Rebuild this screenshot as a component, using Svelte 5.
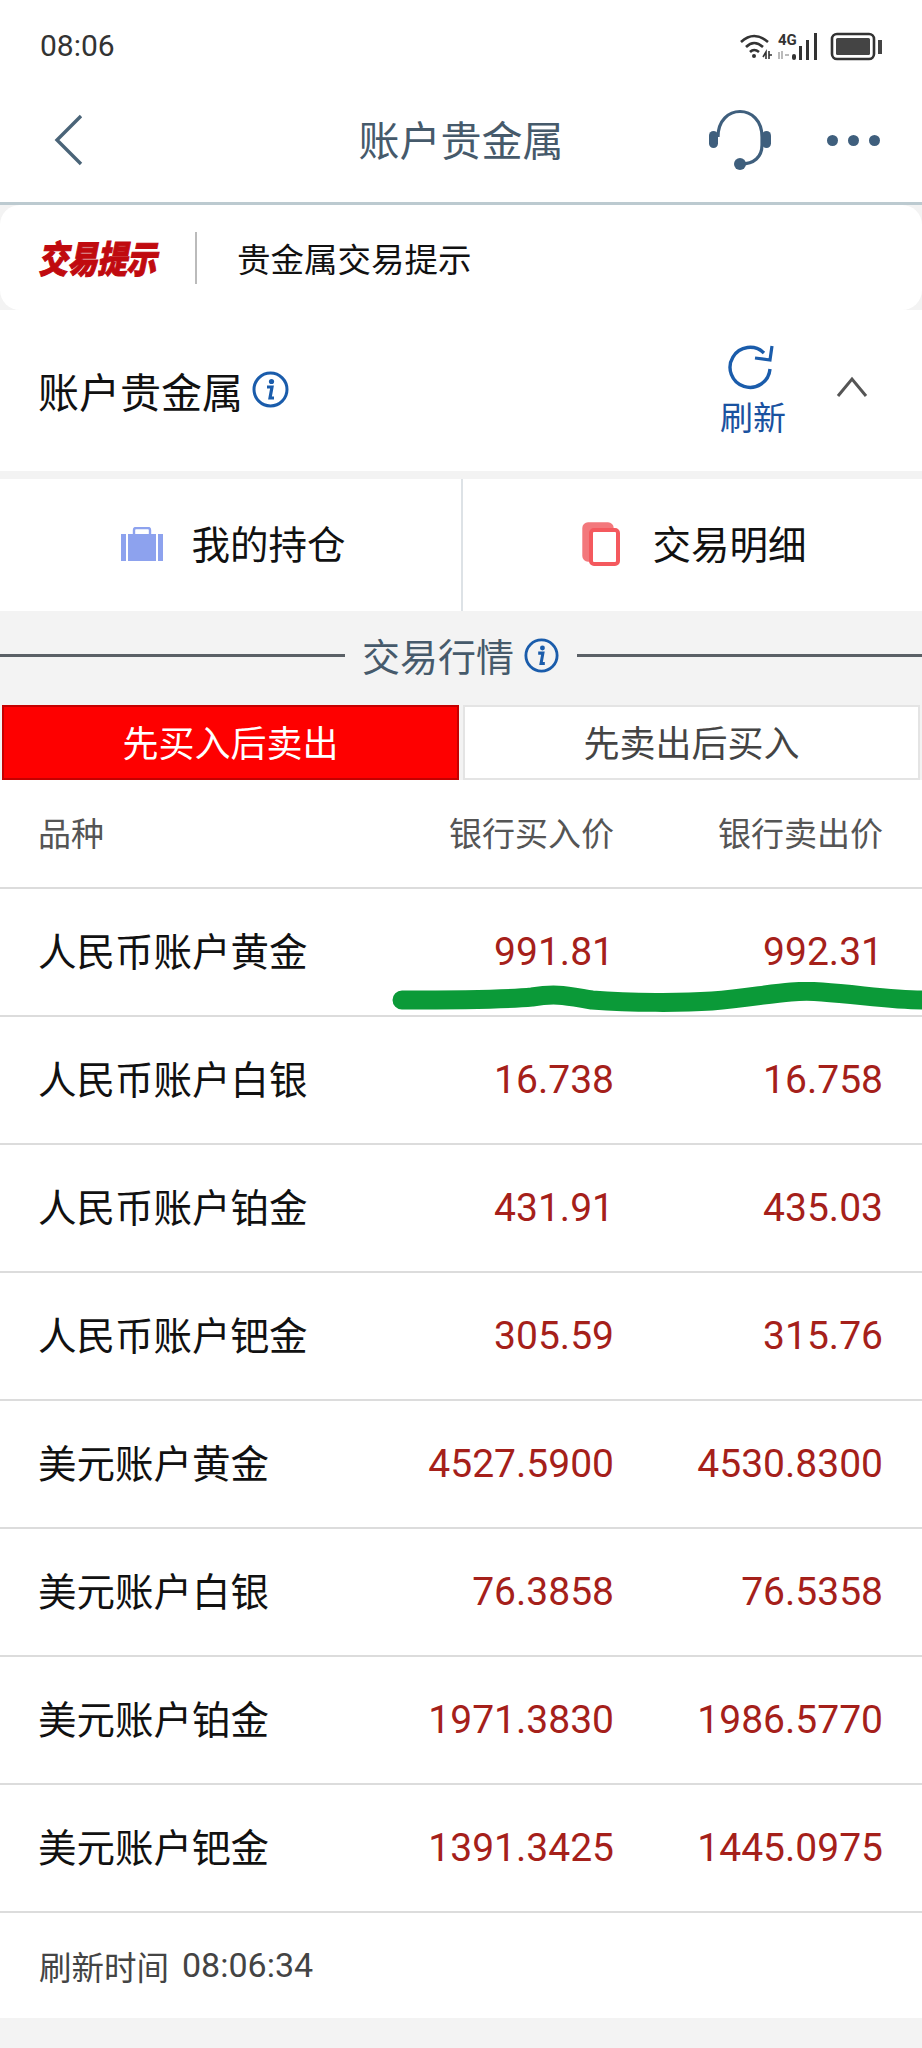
<script>
  const rows = [
    { name: '人民币账户黄金', buy: '991.81', sell: '992.31' },
    { name: '人民币账户白银', buy: '16.738', sell: '16.758' },
    { name: '人民币账户铂金', buy: '431.91', sell: '435.03' },
    { name: '人民币账户钯金', buy: '305.59', sell: '315.76' },
    { name: '美元账户黄金', buy: '4527.5900', sell: '4530.8300' },
    { name: '美元账户白银', buy: '76.3858', sell: '76.5358' },
    { name: '美元账户铂金', buy: '1971.3830', sell: '1986.5770' },
    { name: '美元账户钯金', buy: '1391.3425', sell: '1445.0975' }
  ];
</script>

<div class="page">
  <div class="status">
    <span class="time">08:06</span>
    <svg class="status-icons" width="144" height="30" viewBox="0 0 144 30">
      <!-- wifi -->
      <g fill="none" stroke="#333" stroke-width="2.6">
        <path d="M2 11 Q15 -1 29 11" />
        <path d="M7 16 Q15 8 24 16" />
        <path d="M11 21 Q15 17 20 21" />
      </g>
      <circle cx="15" cy="25" r="2" fill="#333" />
      <path d="M24 26 L27 21 V28 M30 20 V28 M30 24 H33" fill="none" stroke="#333" stroke-width="1.6" />
      <text class="net" x="39" y="14">4G</text>
      <path d="M40 21 V28 M43 20 V28 M46 24 H50" fill="none" stroke="#bbb" stroke-width="2" />
      <!-- signal -->
      <rect x="53" y="23" width="4" height="6" rx="2" fill="#333" />
      <rect x="60" y="15" width="3" height="14" fill="#333" />
      <rect x="67" y="9" width="3" height="20" fill="#333" />
      <rect x="75" y="2" width="3" height="27" fill="#333" />
      <!-- battery -->
      <rect x="93" y="3" width="42" height="25" rx="5" fill="none" stroke="#333" stroke-width="2.6" />
      <rect x="97" y="7" width="34" height="17" rx="1.5" fill="#444" />
      <rect x="139" y="9" width="4" height="14" fill="#444" />
    </svg>
  </div>

  <header class="topbar">
    <svg class="back" width="30" height="52" viewBox="0 0 30 52">
      <path d="M27 2 L3 26 L27 50" fill="none" stroke="#4a6478" stroke-width="3.4" />
    </svg>
    <h1>账户贵金属</h1>
    <svg class="headset" width="64" height="64" viewBox="0 0 64 64">
      <path d="M10 30 C10 -4 54 -4 54 30 V38 C54 50 46 57 33 57" fill="none" stroke="#3f5f7d" stroke-width="3.2" />
      <rect x="1" y="24" width="9" height="17" rx="4.5" fill="#3f5f7d" />
      <rect x="54" y="24" width="9" height="17" rx="4.5" fill="#3f5f7d" />
      <circle cx="32" cy="57" r="6" fill="#3f5f7d" />
    </svg>
    <div class="dots"><i></i><i></i><i></i></div>
  </header>

  <div class="notice">
    <span class="notice-logo">交易提示</span>
    <span class="notice-sep"></span>
    <span class="notice-text">贵金属交易提示</span>
  </div>

  <section class="account">
    <div class="account-title">
      <span>账户贵金属</span>
      <svg class="info" width="37" height="37" viewBox="0 0 37 37">
        <circle cx="18.5" cy="18.5" r="16.5" fill="none" stroke="#1a5cab" stroke-width="3" />
        <circle cx="19.5" cy="10.5" r="2.6" fill="#1a5cab" />
        <path d="M15 16 H20 L18 27 H22" fill="none" stroke="#1a5cab" stroke-width="3.2" />
      </svg>
    </div>
    <div class="refresh">
      <svg width="46" height="46" viewBox="0 0 46 46">
        <path d="M36 8 A20 20 0 1 0 42 24" fill="none" stroke="#1a5cab" stroke-width="3.4" />
        <path d="M27 13 L42 15 L44 1" fill="none" stroke="#1a5cab" stroke-width="3.2" />
      </svg>
      <span>刷新</span>
    </div>
    <svg class="collapse" width="32" height="22" viewBox="0 0 32 22">
      <path d="M2 20 L16 3 L30 20" fill="none" stroke="#555" stroke-width="3" />
    </svg>
  </section>

  <div class="actions">
    <div class="action">
      <svg width="42" height="34" viewBox="0 0 42 34">
        <path d="M13 8 V3 A2 2 0 0 1 15 1 H27 A2 2 0 0 1 29 3 V8" fill="none" stroke="#8da2ee" stroke-width="2.4" />
        <rect x="0" y="7" width="5" height="27" fill="#8da2ee" />
        <rect x="7" y="7" width="28" height="27" fill="#8da2ee" />
        <rect x="37" y="7" width="5" height="27" fill="#8da2ee" />
      </svg>
      <span>我的持仓</span>
    </div>
    <div class="action">
      <svg width="38" height="44" viewBox="0 0 38 44">
        <rect x="2" y="2" width="28" height="36" rx="4" fill="#f3787c" stroke="#f3787c" stroke-width="3.4" />
        <rect x="9" y="8" width="27" height="34" rx="3" fill="#fff" stroke="#f4595e" stroke-width="4" />
      </svg>
      <span>交易明细</span>
    </div>
  </div>

  <div class="market-title">
    <span class="rule"></span>
    <span class="market-label">交易行情</span>
    <svg width="35" height="35" viewBox="0 0 37 37">
      <circle cx="18.5" cy="18.5" r="16.5" fill="none" stroke="#1a5cab" stroke-width="3" />
      <circle cx="19.5" cy="10.5" r="2.6" fill="#1a5cab" />
      <path d="M15 16 H20 L18 27 H22" fill="none" stroke="#1a5cab" stroke-width="3.2" />
    </svg>
    <span class="rule"></span>
  </div>

  <div class="tabs">
    <div class="tab active"><span>先买入后卖出</span></div>
    <div class="tab"><span>先卖出后买入</span></div>
  </div>

  <div class="table">
    <div class="row head">
      <span class="head-name">品种</span>
      <span class="price">银行买入价</span>
      <span class="price">银行卖出价</span>
    </div>
    {#each rows as row}
      <div class="row item">
        <span class="name">{row.name}</span>
        <span class="price">{row.buy}</span>
        <span class="price">{row.sell}</span>
      </div>
    {/each}
    <svg class="marker" width="530" height="36" viewBox="0 0 530 36">
      <path d="M10 18 C60 18 110 18 140 15 C165 11 175 14 200 18 C240 21 290 21 320 19 C370 15 395 7 430 10 C470 13 500 18 530 18" fill="none" stroke="#0b9a38" stroke-width="19" stroke-linecap="round" />
    </svg>
    <div class="updated">
      <span>刷新时间</span>
      <span class="updated-time">08:06:34</span>
    </div>
  </div>
</div>

<style>
  :global(body) {
    background: #f3f3f3;
  }

  .page {
    width: 922px;
    height: 2048px;
    overflow: hidden;
    font-family: Roboto, "Noto Sans CJK SC", sans-serif;
    color: #111;
  }

  .status {
    height: 78px;
    background: #fff;
    display: flex;
    align-items: center;
    justify-content: space-between;
    padding: 12px 39px 0 40px;
    box-sizing: border-box;
  }

  .time {
    font-size: 30px;
    color: #333;
  }

  .status-icons {
    margin-top: 1px;
  }

  .net {
    font-family: Roboto, sans-serif;
    font-size: 15px;
    font-weight: 700;
    fill: #333;
  }

  .topbar {
    height: 127px;
    box-sizing: border-box;
    background: #fff;
    border-bottom: 3px solid #bccad0;
    display: flex;
    align-items: center;
    padding: 0 42px 0 54px;
    position: relative;
  }

  .topbar h1 {
    position: absolute;
    left: 0;
    right: 0;
    text-align: center;
    margin: 0;
    font-size: 41px;
    font-weight: 400;
    color: #465a6b;
    padding-bottom: 5px;
  }

  .headset {
    margin-left: auto;
    margin-top: -2px;
  }

  .dots {
    display: flex;
    gap: 10px;
    margin-left: 55px;
  }

  .dots i {
    width: 11px;
    height: 11px;
    border-radius: 50%;
    background: #3f5f7d;
  }

  .notice {
    height: 105px;
    background: #fff;
    border-radius: 20px;
    display: flex;
    align-items: center;
    padding-left: 38px;
  }

  .notice-logo {
    width: 120px;
    font-size: 30px;
    font-weight: 900;
    font-style: italic;
    letter-spacing: -0.5px;
    color: #c00a0f;
    -webkit-text-stroke: 0.8px #c00a0f;
    white-space: nowrap;
    transform: scaleY(1.25);
    transform-origin: center;
    margin-top: -2px;
  }

  .notice-sep {
    width: 2px;
    height: 52px;
    background: #bbb;
    margin-left: 37px;
  }

  .notice-text {
    font-size: 33.5px;
    margin-left: 40px;
  }

  .account {
    height: 161px;
    background: #fff;
    display: flex;
    align-items: center;
    padding: 0 54px 0 38px;
    margin-bottom: 8px;
  }

  .account-title {
    display: flex;
    align-items: center;
    gap: 9px;
    font-size: 41px;
    margin-top: -2px;
  }

  .refresh {
    margin-left: auto;
    width: 68px;
    display: flex;
    flex-direction: column;
    align-items: center;
    font-size: 33px;
    line-height: 42px;
    color: #1a52a0;
    margin-top: 4px;
    margin-right: 49px;
  }

  .refresh svg {
    margin-left: -4px;
    margin-bottom: 7px;
  }

  .collapse {
    margin-top: -8px;
  }

  .actions {
    height: 132px;
    display: flex;
    background: #fff;
  }

  .action {
    flex: 1;
    display: flex;
    align-items: center;
    justify-content: center;
    gap: 28px;
    font-size: 38.5px;
  }

  .action:last-child {
    gap: 32px;
    padding-left: 4px;
  }

  .action span {
    margin-top: -6px;
  }

  .action svg {
    margin-top: -3px;
  }

  .action:first-child {
    border-right: 2px solid #dde2e6;
    padding-left: 6px;
  }

  .market-title {
    height: 94px;
    box-sizing: border-box;
    display: flex;
    align-items: center;
    font-size: 38px;
    color: #465a6b;
    padding-bottom: 6px;
  }

  .rule {
    flex: 1;
    height: 3px;
    background: #5a6066;
  }

  .market-label {
    margin-left: 17px;
    margin-right: 10px;
    margin-top: -2px;
  }

  .market-title svg {
    margin-right: 18px;
  }

  .tabs {
    display: flex;
    gap: 4px;
    padding: 0 2px;
    height: 75px;
  }

  .tab {
    flex: 1;
    display: flex;
    align-items: center;
    justify-content: center;
    font-size: 36px;
    color: #444;
    background: #fff;
    box-sizing: border-box;
    border: 2px solid #e4e4e4;
  }

  .tab span {
    margin-top: -4px;
  }

  .tab.active {
    background: #fe0000;
    border-color: #c40000;
    color: #fff;
  }

  .table {
    background: #fff;
    position: relative;
    height: 1238px;
  }

  .row {
    display: grid;
    grid-template-columns: 1fr 200px 269px;
    align-items: center;
    padding: 0 39px 0 38px;
    box-sizing: border-box;
    border-bottom: 2px solid #dcdcdc;
  }

  .head {
    height: 109px;
    font-size: 33px;
    color: #555;
  }

  .head span {
    margin-top: -4px;
  }

  .item {
    height: 128px;
  }

  .name {
    font-size: 38.5px;
    margin-top: -6px;
  }

  .price {
    text-align: right;
    white-space: nowrap;
  }

  .item .price {
    font-size: 39px;
    color: #a5201a;
  }

  .marker {
    position: absolute;
    left: 392px;
    top: 202px;
  }

  .updated {
    height: 104px;
    padding-left: 39px;
    display: flex;
    align-items: center;
    gap: 13px;
    font-size: 32.5px;
    color: #444;
  }

  .updated-time {
    font-size: 34px;
  }
</style>
